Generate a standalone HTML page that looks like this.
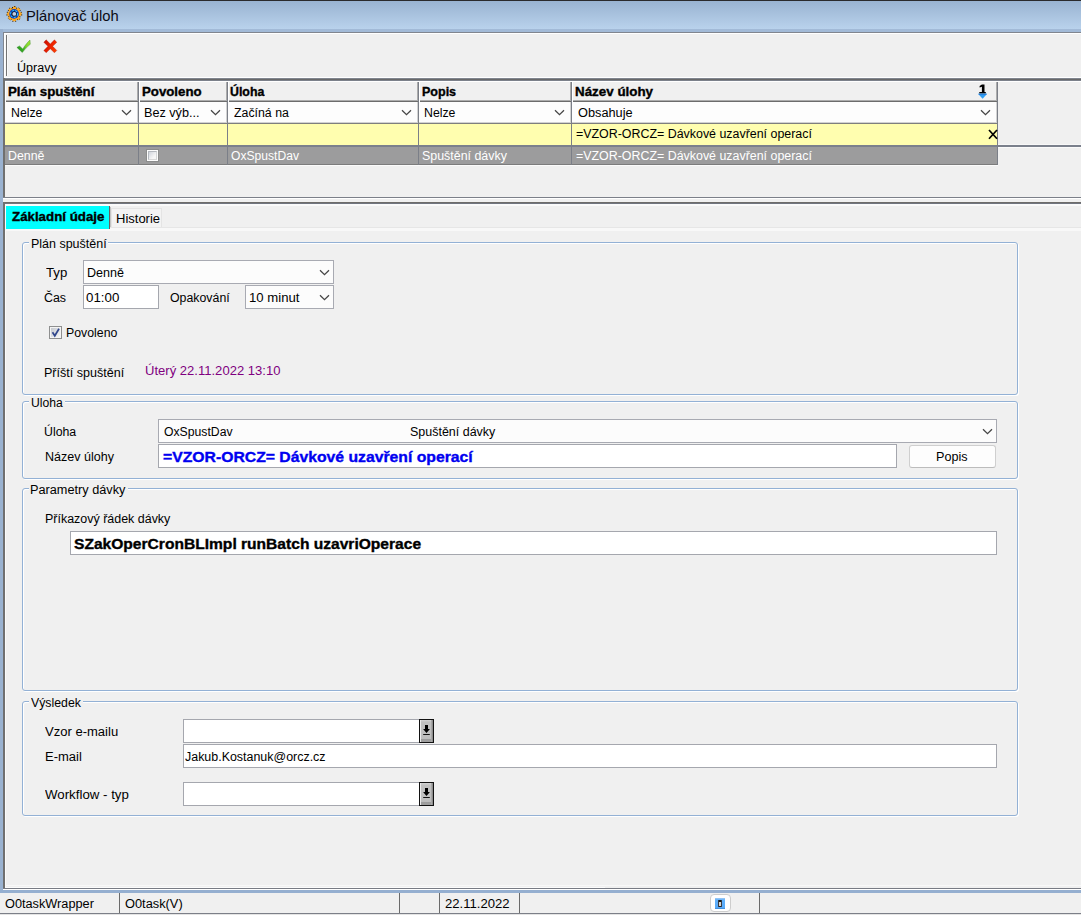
<!DOCTYPE html>
<html>
<head>
<meta charset="utf-8">
<title>Plánovač úloh</title>
<style>
*{box-sizing:border-box;margin:0;padding:0}
html,body{width:1081px;height:915px;overflow:hidden;background:#f0f0f0}
body{font-family:"Liberation Sans",sans-serif;font-size:12px;color:#000;position:relative}
.a{position:absolute}
.t{position:absolute;white-space:nowrap;display:inline-block;transform-origin:0 0}
.hd{position:absolute;top:81px;height:21px;background:#f0f0f0;box-shadow:inset 1px 1px 0 #fff,inset 0 -1px 0 #6c6c6c,inset -1px 0 0 #7b7f88,inset -2px -2px 0 #acacac}
.fl{position:absolute;top:102px;height:22px;background:#fdfdfd;box-shadow:inset 0 -1px 0 #7e7e7e,inset -1px 0 0 #7b7f88,inset -2px -2px 0 #d2d2d2}
.yl{position:absolute;top:124px;height:21px;background:#fffeaf;border-right:1px solid #7b7f88}
.gr{position:absolute;top:147px;height:18px;background:#9c9c9d;border-right:1px solid #7e7e80;border-bottom:1px solid #7c7c7c}
.cv{position:absolute;width:11px;height:7px}
.gb{position:absolute;border:1px solid #93b1d5;border-radius:3px;box-shadow:1px 1px 0 #fff,inset 1px 1px 0 #fff}
.lb{position:absolute;background:#f0f0f0;height:3px}
.in{position:absolute;background:#fff;border:1px solid #a5a7ae}
.cb{position:absolute;background:#fcfcfc;border:1px solid #a8aab2}
.db{position:absolute;width:15px;height:24px;border:1px solid #121212;background:linear-gradient(180deg,#d4d4d4 0,#c0c0c0 10%,#bebebe 84%,#9c9c9c 87%,#a0a0a0 100%);box-shadow:inset 1px 0 0 #ebebeb,inset -1px 0 0 #8e8e8e,inset -2px 0 0 #a8a8a8}
.sp{position:absolute;top:893px;width:1px;height:20px;background:#6a6a6a}
</style>
</head>
<body>
<!-- window frame -->
<div class="a" style="left:0;top:0;width:1081px;height:1px;background:#2a2a2c"></div>
<div class="a" style="left:0;top:1px;width:1081px;height:28px;background:linear-gradient(#99b3d1,#b9d2ec)"></div>
<div class="a" style="left:0;top:29px;width:1081px;height:3px;background:#a2bad7"></div>
<div class="a" style="left:0;top:29px;width:3px;height:864px;background:#9ab2d0"></div>
<div class="a" style="left:0;top:890px;width:1081px;height:3px;background:#95afd0"></div>

<!-- title icon -->
<svg class="a" style="left:5px;top:5px" width="19" height="18" viewBox="5 5 19 18">
  <path d="M12.49 8.02 12.66 6.53 15.94 6.53 16.11 8.02 17.21 8.48 18.38 7.54 20.71 9.87 19.77 11.04 20.23 12.14 21.72 12.31 21.72 15.59 20.23 15.76 19.77 16.86 20.71 18.03 18.38 20.36 17.21 19.42 16.11 19.88 15.94 21.37 12.66 21.37 12.49 19.88 11.39 19.42 10.22 20.36 7.89 18.03 8.83 16.86 8.37 15.76 6.88 15.59 6.88 12.31 8.37 12.14 8.83 11.04 7.89 9.87 10.22 7.54 11.39 8.48z" fill="#fda821" stroke="#0c0804" stroke-width="0.9" stroke-dasharray="1 2.1"/>
  <circle cx="14.1" cy="13.9" r="4.8" fill="#0b3ec2"/>
  <circle cx="14.1" cy="13.9" r="3.45" fill="none" stroke="#2fc6fb" stroke-width="1.1" stroke-dasharray="2.2 1.2"/>
  <circle cx="14.1" cy="13.9" r="2.7" fill="#141c2c"/>
  <circle cx="14.3" cy="13.9" r="1.9" fill="#c3cfe3"/>
</svg>

<!-- toolbar -->
<div class="a" style="left:3px;top:32px;width:1078px;height:1px;background:#81868f"></div>
<div class="a" style="left:3px;top:33px;width:1px;height:45px;background:#81868f"></div>
<div class="a" style="left:4px;top:33px;width:1077px;height:1px;background:#fff"></div>
<div class="a" style="left:4px;top:33px;width:1px;height:45px;background:#fff"></div>
<div class="a" style="left:5px;top:34px;width:1px;height:43px;background:#f8f8f8"></div>
<div class="a" style="left:7px;top:35px;width:1px;height:41px;background:#f9f9f9"></div>
<div class="a" style="left:4px;top:77px;width:1077px;height:1px;background:#fff"></div>
<div class="a" style="left:6px;top:35px;width:1px;height:41px;background:#747474"></div>
<svg class="a" style="left:15px;top:38px" width="45" height="17" viewBox="15 38 45 17">
  <defs>
    <linearGradient id="gck" x1="17" y1="52" x2="30" y2="40" gradientUnits="userSpaceOnUse"><stop offset="0" stop-color="#1f8f1c"/><stop offset="0.38" stop-color="#3aae22"/><stop offset="0.6" stop-color="#7ed42a"/><stop offset="1" stop-color="#a4ea34"/></linearGradient>
    <linearGradient id="grx" x1="44" y1="41" x2="57" y2="50" gradientUnits="userSpaceOnUse"><stop offset="0" stop-color="#c80c00"/><stop offset="0.55" stop-color="#ee2400"/><stop offset="1" stop-color="#ff4200"/></linearGradient>
    <linearGradient id="grx2" x1="-8" y1="2.600" x2="8" y2="-2.600" gradientUnits="userSpaceOnUse"><stop offset="0" stop-color="#c80c00"/><stop offset="0.55" stop-color="#ee2400"/><stop offset="1" stop-color="#ff4200"/></linearGradient>
  </defs>
  <path d="M16.900 47.400 19.500 45.900 22.800 48.900C25 45.300 27.500 42.200 30 40L30.300 44.300C27.200 46.600 24.600 49.500 22.300 52.600z" fill="url(#gck)" stroke="#2c7a26" stroke-width="0.500" stroke-opacity="0.700"/>
  <g transform="translate(50.300 46.350)" fill="url(#grx)" stroke="#a01408" stroke-width="0.500" stroke-opacity="0.600">
    <path transform="rotate(45)" d="M-7.500 -1.700h5.800v-5.800h3.400v5.800h5.800v3.400h-5.800v5.800h-3.400v-5.800h-5.800z" fill="url(#grx2)"/>
  </g>
</svg>
<!-- grid panel -->
<div class="a" style="left:3px;top:78px;width:1078px;height:1px;background:#81868f"></div>
<div class="a" style="left:3px;top:79px;width:1078px;height:1px;background:#696969"></div>
<div class="a" style="left:3px;top:80px;width:1078px;height:1px;background:#7c818b"></div>
<div class="a" style="left:3px;top:78px;width:2px;height:120px;background:#707070"></div>
<div class="a" style="left:5px;top:145px;width:1076px;height:2px;background:#7b808c"></div>
<div class="a" style="left:998px;top:147px;width:83px;height:1px;background:#fafafa"></div>
<div class="a" style="left:998px;top:144px;width:83px;height:1px;background:#f8f8f8"></div>
<div class="a" style="left:5px;top:165px;width:993px;height:1px;background:#fbfbfb"></div>
<div class="a" style="left:3px;top:197px;width:1078px;height:1px;background:#7c8089"></div>
<div class="a" style="left:3px;top:198px;width:1078px;height:1px;background:#fff"></div>
<div class="a" style="left:5px;top:81px;width:1076px;height:1px;background:#fff"></div>
<!-- header cells -->
<div class="hd" style="left:5px;width:134px"></div>
<div class="hd" style="left:139px;width:89px"></div>
<div class="hd" style="left:228px;width:191px"></div>
<div class="hd" style="left:419px;width:153px"></div>
<div class="hd" style="left:572px;width:426px"></div>
<!-- filter cells -->
<div class="fl" style="left:5px;width:134px"></div>
<div class="fl" style="left:139px;width:89px"></div>
<div class="fl" style="left:228px;width:191px"></div>
<div class="fl" style="left:419px;width:153px"></div>
<div class="fl" style="left:572px;width:426px"></div>
<!-- yellow cells -->
<div class="yl" style="left:5px;width:134px"></div>
<div class="yl" style="left:139px;width:89px"></div>
<div class="yl" style="left:228px;width:191px"></div>
<div class="yl" style="left:419px;width:153px"></div>
<div class="yl" style="left:572px;width:426px"></div>
<!-- gray row -->
<div class="gr" style="left:5px;width:134px"></div>
<div class="gr" style="left:139px;width:89px"></div>
<div class="gr" style="left:228px;width:191px"></div>
<div class="gr" style="left:419px;width:153px"></div>
<div class="gr" style="left:572px;width:426px"></div>
<!-- separators -->
<div class="a" style="left:138px;top:82px;width:1px;height:83px;background:#7b7f88"></div>
<div class="a" style="left:227px;top:82px;width:1px;height:83px;background:#7b7f88"></div>
<div class="a" style="left:418px;top:82px;width:1px;height:83px;background:#7b7f88"></div>
<div class="a" style="left:571px;top:82px;width:1px;height:83px;background:#7b7f88"></div>
<div class="a" style="left:997px;top:82px;width:1px;height:83px;background:#7b7f88"></div>
<!-- chevrons filter row -->
<svg class="cv" style="left:121px;top:109px" viewBox="0 0 11 7"><path d="M1 1.200 5.500 5.700 10 1.200" fill="none" stroke="#464646" stroke-width="1.250"/></svg>
<svg class="cv" style="left:210px;top:109px" viewBox="0 0 11 7"><path d="M1 1.200 5.500 5.700 10 1.200" fill="none" stroke="#464646" stroke-width="1.250"/></svg>
<svg class="cv" style="left:401px;top:109px" viewBox="0 0 11 7"><path d="M1 1.200 5.500 5.700 10 1.200" fill="none" stroke="#464646" stroke-width="1.250"/></svg>
<svg class="cv" style="left:554px;top:109px" viewBox="0 0 11 7"><path d="M1 1.200 5.500 5.700 10 1.200" fill="none" stroke="#464646" stroke-width="1.250"/></svg>
<svg class="cv" style="left:980px;top:109px" viewBox="0 0 11 7"><path d="M1 1.200 5.500 5.700 10 1.200" fill="none" stroke="#464646" stroke-width="1.250"/></svg>
<!-- sort arrow, X, grid checkbox -->
<svg class="a" style="left:977px;top:84px" width="12" height="16" viewBox="977 84 12 16"><path d="M981.900 84.400h2.600v7.600h1.300v1.400h-6.500v-1.400h2.600v-5.300l-2.300 .9v-1.500z" fill="#000"/><path d="M978 93.800h9.200L982.600 98.800z" fill="#2f9df2"/><path d="M978.600 94.200h8" stroke="#1b6fd0" stroke-width="0.800"/></svg>
<svg class="a" style="left:988px;top:129px" width="10" height="11" viewBox="0 0 10 11"><path d="M1 1 9 9.800M9 1 1 9.800" stroke="#000" stroke-width="1.700" fill="none"/></svg>
<div class="a" style="left:146px;top:149px;width:13px;height:13px;border:1px solid #8b8c8c;background:#fcfcfc"></div>
<div class="a" style="left:148px;top:151px;width:9px;height:9px;border:1px solid #b4b8be;border-right-color:#d4d6d8;border-bottom-color:#d8d8d8;background:linear-gradient(135deg,#d0d4dc,#f6f6f6 70%)"></div>

<!-- tab panel -->
<div class="a" style="left:3px;top:202px;width:1078px;height:1px;background:#6e6c6a"></div>
<div class="a" style="left:3px;top:203px;width:1078px;height:1px;background:#70757f"></div>
<div class="a" style="left:3px;top:202px;width:2px;height:687px;background:#707070"></div>
<div class="a" style="left:5px;top:204px;width:1076px;height:2px;background:#fafafa"></div>
<div class="a" style="left:5px;top:204px;width:1px;height:684px;background:#fbfbfb"></div>
<div class="a" style="left:5px;top:885px;width:1076px;height:1px;background:#f8f8f8"></div>
<div class="a" style="left:5px;top:887px;width:600px;height:1px;background:#fcfcfc"></div>
<div class="a" style="left:3px;top:888px;width:1078px;height:1px;background:#787b84"></div>
<div class="a" style="left:3px;top:889px;width:1078px;height:1px;background:#fff"></div>
<div class="a" style="left:6px;top:206px;width:103px;height:23px;background:#00ffff"></div>
<div class="a" style="left:109px;top:206px;width:1px;height:23px;background:#6b5f5f"></div>
<div class="a" style="left:110px;top:207px;width:1px;height:22px;background:#c4c4c4"></div>
<div class="a" style="left:111px;top:208px;width:51px;height:20px;background:#f3f3f3;border:1px solid #e4e4e4"></div>
<div class="a" style="left:6px;top:229px;width:1075px;height:2px;background:#f8f8f8"></div>
<div class="a" style="left:110px;top:228px;width:971px;height:1px;background:#f8f8f8"></div>
<div class="a" style="left:110px;top:227px;width:971px;height:1px;background:#e6e6e6"></div>

<!-- group boxes -->
<div class="gb" style="left:22px;top:242px;width:996px;height:153px"></div>
<div class="lb" style="left:29px;top:241px;width:79px"></div>
<div class="gb" style="left:22px;top:401px;width:996px;height:78px"></div>
<div class="lb" style="left:29px;top:400px;width:36px"></div>
<div class="gb" style="left:22px;top:488px;width:996px;height:203px"></div>
<div class="lb" style="left:29px;top:487px;width:99px"></div>
<div class="gb" style="left:22px;top:701px;width:996px;height:115px"></div>
<div class="lb" style="left:29px;top:700px;width:54px"></div>

<!-- group 1 controls -->
<div class="cb" style="left:83px;top:260px;width:251px;height:24px"></div>
<svg class="cv" style="left:319px;top:269px" viewBox="0 0 11 7"><path d="M1 1.200 5.500 5.700 10 1.200" fill="none" stroke="#464646" stroke-width="1.250"/></svg>
<div class="in" style="left:83px;top:285px;width:76px;height:24px"></div>
<div class="cb" style="left:245px;top:285px;width:89px;height:24px"></div>
<svg class="cv" style="left:319px;top:294px" viewBox="0 0 11 7"><path d="M1 1.200 5.500 5.700 10 1.200" fill="none" stroke="#464646" stroke-width="1.250"/></svg>
<div class="a" style="left:49px;top:326px;width:13px;height:13px;border:1px solid #8e8f8f;background:#f4f4f4"></div>
<div class="a" style="left:51px;top:328px;width:9px;height:9px;background:linear-gradient(135deg,#c4c8cf,#f6f6f6)"></div>
<svg class="a" style="left:51px;top:328px" width="10" height="10" viewBox="0 0 10 10"><path d="M1.500 4.200 3.800 7.800 8 0.800" fill="none" stroke="#31478c" stroke-width="1.700"/></svg>

<!-- group 2 controls -->
<div class="cb" style="left:158px;top:419px;width:839px;height:24px"></div>
<svg class="cv" style="left:982px;top:428px" viewBox="0 0 11 7"><path d="M1 1.200 5.500 5.700 10 1.200" fill="none" stroke="#464646" stroke-width="1.250"/></svg>
<div class="in" style="left:158px;top:444px;width:739px;height:24px"></div>
<div class="a" style="left:909px;top:445px;width:87px;height:23px;border:1px solid #cfcfcf;border-bottom-color:#bcbcbc;border-radius:3px;background:#fdfdfd"></div>

<!-- group 3 controls -->
<div class="in" style="left:70px;top:531px;width:927px;height:24px"></div>

<!-- group 4 controls -->
<div class="in" style="left:183px;top:719px;width:237px;height:24px"></div>
<div class="db" style="left:419px;top:719px"></div>
<svg class="a" style="left:421px;top:724px" width="11" height="13" viewBox="0 0 11 13"><path d="M4 1h3v4h1.900L5.500 8.900 2.100 5h1.900z" fill="#000"/><path d="M2.200 10.500h6.600" stroke="#111" stroke-width="1"/></svg>
<div class="in" style="left:183px;top:744px;width:814px;height:24px"></div>
<div class="in" style="left:183px;top:782px;width:237px;height:24px"></div>
<div class="db" style="left:419px;top:782px"></div>
<svg class="a" style="left:421px;top:787px" width="11" height="13" viewBox="0 0 11 13"><path d="M4 1h3v4h1.900L5.500 8.900 2.100 5h1.900z" fill="#000"/><path d="M2.200 10.500h6.600" stroke="#111" stroke-width="1"/></svg>

<!-- status bar -->
<div class="a" style="left:0;top:913px;width:1081px;height:1px;background:#7c7f88"></div>
<div class="a" style="left:0;top:914px;width:1081px;height:1px;background:#e4e4e4"></div>
<div class="sp" style="left:119px"></div>
<div class="sp" style="left:399px"></div>
<div class="sp" style="left:439px"></div>
<div class="sp" style="left:519px"></div>
<div class="sp" style="left:759px"></div>
<div class="a" style="left:710px;top:894px;width:21px;height:18px;border:1px solid #cdcdcd;border-radius:4px;background:#fff"></div>
<div class="a" style="left:715px;top:898px;width:10px;height:11px;background:linear-gradient(#a4cdf5 0,#60b0fb 18%,#58aaf9 86%,#3d86d0 100%)"></div>
<div class="a" style="left:718px;top:900px;width:4px;height:7px;border:1px solid #3a3c42;border-top:2px solid #1a1a1a;border-bottom-color:#222;border-radius:1px;background:#d8d4d0"></div>

<span class="t" style="left:26.14px;top:6.0px;font-size:14.5px;line-height:20px;transform:scaleX(1.0165);color:#0c0c14">Plánovač úloh</span>
<span class="t" style="left:16.86px;top:59.8px;font-size:12px;line-height:16px;transform:scaleX(1.0443)">Úpravy</span>
<span class="t" style="left:7.82px;top:83.8px;font-size:12px;line-height:16px;transform:scaleX(1.1070);font-weight:bold;-webkit-text-stroke:0.35px">Plán spuštění</span>
<span class="t" style="left:142.01px;top:83.8px;font-size:12px;line-height:16px;transform:scaleX(1.1026);font-weight:bold;-webkit-text-stroke:0.35px">Povoleno</span>
<span class="t" style="left:230.39px;top:83.8px;font-size:12px;line-height:16px;transform:scaleX(1.0287);font-weight:bold;-webkit-text-stroke:0.35px">Úloha</span>
<span class="t" style="left:421.61px;top:83.8px;font-size:12px;line-height:16px;transform:scaleX(1.0430);font-weight:bold;-webkit-text-stroke:0.35px">Popis</span>
<span class="t" style="left:574.62px;top:83.8px;font-size:12px;line-height:16px;transform:scaleX(1.1147);font-weight:bold;-webkit-text-stroke:0.35px">Název úlohy</span>
<span class="t" style="left:10.89px;top:104.8px;font-size:12px;line-height:16px;transform:scaleX(1.0248)">Nelze</span>
<span class="t" style="left:144.34px;top:104.8px;font-size:12px;line-height:16px;transform:scaleX(1.0530)">Bez výb...</span>
<span class="t" style="left:233.98px;top:104.8px;font-size:12px;line-height:16px;transform:scaleX(1.0280)">Začíná na</span>
<span class="t" style="left:424.32px;top:104.8px;font-size:12px;line-height:16px;transform:scaleX(1.0248)">Nelze</span>
<span class="t" style="left:578.09px;top:104.8px;font-size:12px;line-height:16px;transform:scaleX(1.0624)">Obsahuje</span>
<span class="t" style="left:575.50px;top:125.8px;font-size:12px;line-height:16px;transform:scaleX(1.0342)">=VZOR-ORCZ= Dávkové uzavření operací</span>
<span class="t" style="left:7.94px;top:147.8px;font-size:12px;line-height:16px;transform:scaleX(1.0303);color:#ffffff">Denně</span>
<span class="t" style="left:231.37px;top:147.8px;font-size:12px;line-height:16px;transform:scaleX(1.0090);color:#ffffff">OxSpustDav</span>
<span class="t" style="left:421.79px;top:147.8px;font-size:12px;line-height:16px;transform:scaleX(1.0347);color:#ffffff">Spuštění dávky</span>
<span class="t" style="left:575.50px;top:147.8px;font-size:12px;line-height:16px;transform:scaleX(1.0342);color:#ffffff">=VZOR-ORCZ= Dávkové uzavření operací</span>
<span class="t" style="left:11.59px;top:208.8px;font-size:12px;line-height:16px;transform:scaleX(1.1087);font-weight:bold;-webkit-text-stroke:0.35px">Základní údaje</span>
<span class="t" style="left:115.66px;top:210.8px;font-size:12px;line-height:16px;transform:scaleX(1.0835)">Historie</span>
<span class="t" style="left:30.77px;top:235.8px;font-size:12px;line-height:16px;transform:scaleX(1.0398)">Plán spuštění</span>
<span class="t" style="left:45.50px;top:264.8px;font-size:12px;line-height:16px;transform:scaleX(1.0989)">Typ</span>
<span class="t" style="left:86.92px;top:264.8px;font-size:12px;line-height:16px;transform:scaleX(1.0446)">Denně</span>
<span class="t" style="left:44.41px;top:289.8px;font-size:12px;line-height:16px;transform:scaleX(1.0348)">Čas</span>
<span class="t" style="left:85.69px;top:289.8px;font-size:12px;line-height:16px;transform:scaleX(1.1084)">01:00</span>
<span class="t" style="left:169.50px;top:289.8px;font-size:12px;line-height:16px;transform:scaleX(1.0287)">Opakování</span>
<span class="t" style="left:248.78px;top:289.8px;font-size:12px;line-height:16px;transform:scaleX(1.0957)">10 minut</span>
<span class="t" style="left:65.76px;top:324.8px;font-size:12px;line-height:16px;transform:scaleX(1.0255)">Povoleno</span>
<span class="t" style="left:44.17px;top:364.8px;font-size:12px;line-height:16px;transform:scaleX(1.0459)">Příští spuštění</span>
<span class="t" style="left:145.08px;top:362.8px;font-size:12px;line-height:16px;transform:scaleX(1.0875);color:#800080">Úterý 22.11.2022 13:10</span>
<span class="t" style="left:31.32px;top:394.8px;font-size:12px;line-height:16px;transform:scaleX(1.0137)">Uloha</span>
<span class="t" style="left:44.48px;top:423.8px;font-size:12px;line-height:16px;transform:scaleX(1.0269)">Úloha</span>
<span class="t" style="left:163.94px;top:423.8px;font-size:12px;line-height:16px;transform:scaleX(1.0174)">OxSpustDav</span>
<span class="t" style="left:410.39px;top:423.8px;font-size:12px;line-height:16px;transform:scaleX(1.0396)">Spuštění dávky</span>
<span class="t" style="left:44.96px;top:448.8px;font-size:12px;line-height:16px;transform:scaleX(1.0438)">Název úlohy</span>
<span class="t" style="left:162.71px;top:446.9px;font-size:14.7px;line-height:20px;transform:scaleX(1.0719);font-weight:bold;-webkit-text-stroke:0.35px;color:#0000f0">=VZOR-ORCZ= Dávkové uzavření operací</span>
<span class="t" style="left:935.75px;top:448.8px;font-size:12px;line-height:16px;transform:scaleX(1.0506)">Popis</span>
<span class="t" style="left:30.36px;top:481.8px;font-size:12px;line-height:16px;transform:scaleX(1.0597)">Parametry dávky</span>
<span class="t" style="left:44.77px;top:510.8px;font-size:12px;line-height:16px;transform:scaleX(1.0381)">Příkazový řádek dávky</span>
<span class="t" style="left:73.50px;top:533.9px;font-size:14.7px;line-height:20px;transform:scaleX(1.0605);font-weight:bold;-webkit-text-stroke:0.35px">SZakOperCronBLImpl runBatch uzavriOperace</span>
<span class="t" style="left:31.38px;top:694.8px;font-size:12px;line-height:16px;transform:scaleX(1.0257)">Výsledek</span>
<span class="t" style="left:45.38px;top:723.8px;font-size:12px;line-height:16px;transform:scaleX(1.0861)">Vzor e-mailu</span>
<span class="t" style="left:44.84px;top:748.8px;font-size:12px;line-height:16px;transform:scaleX(1.0817)">E-mail</span>
<span class="t" style="left:185.45px;top:748.8px;font-size:12px;line-height:16px;transform:scaleX(1.0365)">Jakub.Kostanuk@orcz.cz</span>
<span class="t" style="left:45.49px;top:786.8px;font-size:12px;line-height:16px;transform:scaleX(1.1068)">Workflow - typ</span>
<span class="t" style="left:5.29px;top:895.8px;font-size:12px;line-height:16px;transform:scaleX(1.0609)">O0taskWrapper</span>
<span class="t" style="left:125.23px;top:895.8px;font-size:12px;line-height:16px;transform:scaleX(1.0676)">O0task(V)</span>
<span class="t" style="left:444.90px;top:895.8px;font-size:12px;line-height:16px;transform:scaleX(1.0915)">22.11.2022</span>
</body>
</html>
